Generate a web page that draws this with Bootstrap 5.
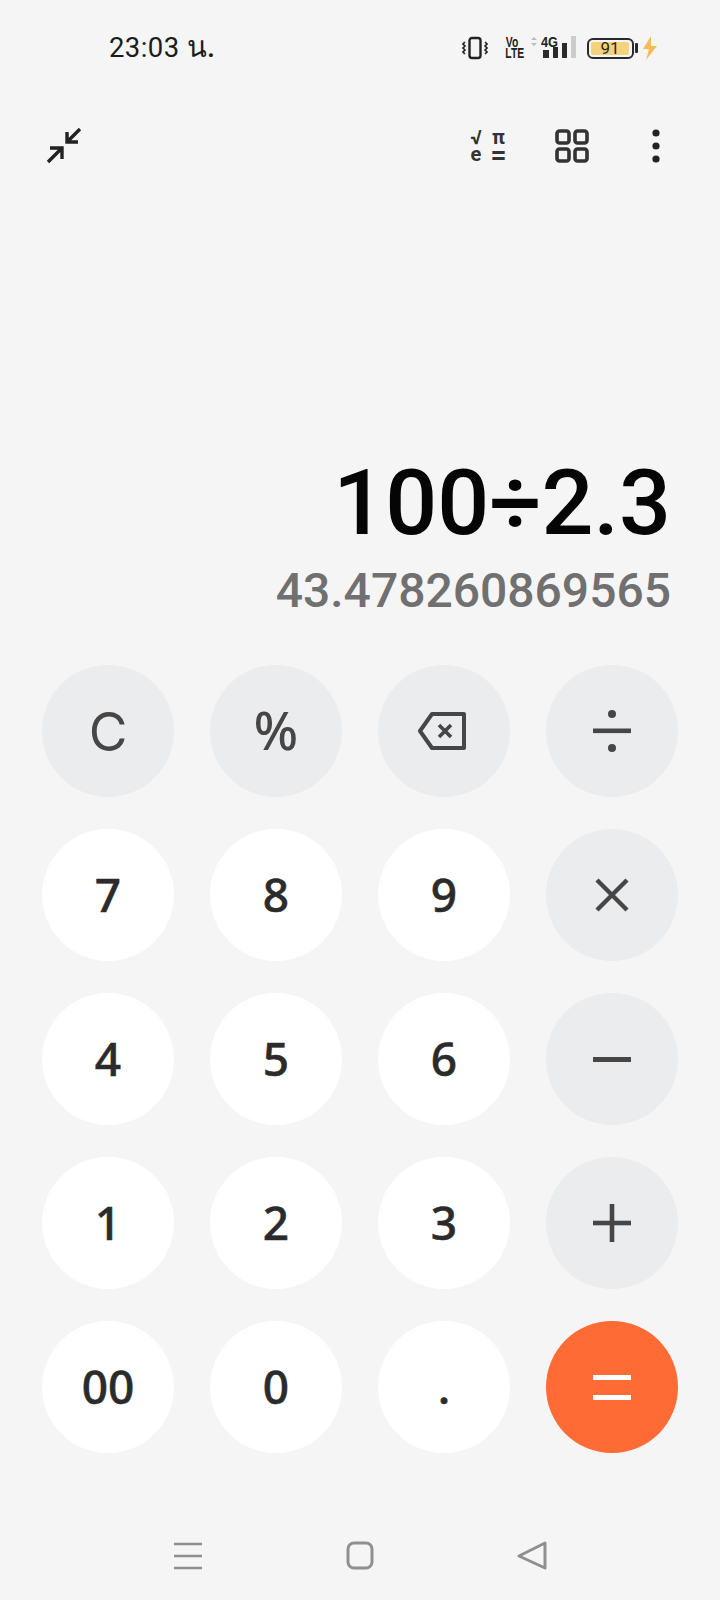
<!DOCTYPE html>
<html lang="th">

<head>
  <meta charset="UTF-8" />
  <meta name="viewport" content="width=device-width, initial-scale=1" />
  <title>Calculator</title>
  <link href="https://cdn.jsdelivr.net/npm/bootstrap@5.3.0/dist/css/bootstrap.min.css" rel="stylesheet" />
  <style>
    body {
      background: #f5f5f5;
      width: 720px;
      height: 1600px;
      overflow: hidden;
      font-family: Roboto, "Noto Sans", sans-serif;
    }

    .status-row {
      height: 96px;
      padding: 0 62px 0 109px;
    }

    .clock-text {
      font-size: 27.5px;
      color: #1c1c1c;
      letter-spacing: .4px;
    }

    .clock-text span {
      font-size: 29px;
      font-weight: 500;
    }

    .volte-text {
      width: 18px;
      margin-left: 15px;
      font-size: 14px;
      line-height: 11.5px;
      font-weight: 700;
      color: #222;
      text-align: center;
      font-family: "Liberation Sans", sans-serif;
      transform: scaleX(.74);
    }

    .volte-text span {
      display: block;
    }

    .net-text {
      left: 10px;
      top: 0;
      font-size: 15px;
      line-height: 12px;
      font-weight: 700;
      color: #222;
      font-family: "Liberation Sans", sans-serif;
      transform: scaleX(.85);
      transform-origin: left center;
    }

    .battery-box {
      width: 47px;
      height: 21px;
      border: 2px solid #2a2a2a;
      border-radius: 6px;
      padding: 2px;
    }

    .battery-fill {
      height: 100%;
      width: 38px;
      background: #f6d27c;
      border-radius: 2px;
      font-size: 17px;
      line-height: 13px;
      color: #2a2a2a;
      text-align: center;
    }

    .tool-row {
      height: 100px;
      padding: 0 60px 0 46px;
    }

    .math-icon {
      display: grid;
      grid-template-columns: 18px 19px;
      column-gap: 4px;
      width: 41px;
      font-weight: 700;
      font-size: 20px;
      line-height: 17px;
      color: #333;
      text-align: center;
    }

    .math-eq {
      font-size: 28px;
    }

    .display-box {
      height: 469px;
      padding: 0 49px 44px 0;
    }

    .expr-line {
      font-size: 91.5px;
      line-height: 100px;
      font-weight: 500;
      color: #050505;
      margin-bottom: 8px;
    }

    .result-line {
      font-size: 48px;
      line-height: 60px;
      font-weight: 500;
      color: #707070;
    }

    .key-grid {
      display: grid;
      grid-template-columns: repeat(4, 132px);
      column-gap: 36px;
      row-gap: 32px;
      padding: 0 42px;
    }

    .calc-key {
      width: 132px;
      height: 132px;
      padding: 0 0 3px;
      border: 0;
      background: #fff;
      color: #2b2b2b;
      font-family: "Noto Sans", sans-serif;
      font-size: 46px;
      font-weight: 500;
      -webkit-text-stroke: .5px #2b2b2b;
      line-height: 1;
    }

    .calc-key.key-op {
      background: #ebecee;
      color: #464646;
      -webkit-text-stroke: 0;
    }

    .calc-key.key-clear {
      font-family: Inter, sans-serif;
      font-size: 53px;
      font-weight: 400;
      padding: 2px 0 0;
    }

    .calc-key.key-pct {
      font-size: 52px;
    }

    .calc-key.key-eq {
      background: #ff6b35;
    }

    .nav-row {
      padding-top: 88px;
      gap: 142px;
    }
  </style>
</head>

<body>
  <!-- status bar -->
  <div class="status-row d-flex align-items-center">
    <span class="clock-text">23:03 <span>น.</span></span>
    <div class="d-flex align-items-center ms-auto">
      <svg width="26" height="24" viewBox="0 0 26 24" fill="none" stroke="#222">
        <rect x="7.5" y="2" width="11" height="20" rx="2.5" stroke-width="2.4" />
        <path d="M3 6l-2 2 2 2-2 2 2 2-2 2 2 2M23 6l2 2-2 2 2 2-2 2 2 2-2 2" stroke-width="1.6" />
      </svg>
      <div class="volte-text"><span>Vo</span><span>LTE</span></div>
      <div class="position-relative" style="margin-left:10px;width:46px;height:24px">
        <svg width="46" height="24" viewBox="0 0 46 24" class="d-block">
          <path d="M0 4l3-3 3 3zM0 7l3 3 3-3z" fill="#bbb" />
          <rect x="12" y="14" width="6" height="8" fill="#2a2a2a" />
          <rect x="22" y="11" width="5" height="11" fill="#2a2a2a" />
          <rect x="31" y="7" width="5" height="15" fill="#2a2a2a" />
          <rect x="40" y="0" width="5" height="22" fill="#ccc" />
        </svg>
        <span class="net-text position-absolute">4G</span>
      </div>
      <div class="battery-box" style="margin-left:10px">
        <div class="battery-fill">91</div>
      </div>
      <svg width="4" height="10" viewBox="0 0 4 10" style="margin-left:1px">
        <rect width="3" height="10" rx="1" fill="#2a2a2a" />
      </svg>
      <svg width="16" height="24" viewBox="0 0 16 24" style="margin-left:3px">
        <path d="M9 0L1 13h6L4 24l11-14H9z" fill="#f6bb59" />
      </svg>
    </div>
  </div>

  <!-- tool bar -->
  <div class="tool-row d-flex align-items-center">
    <svg width="36" height="36" viewBox="0 0 36 36" fill="none" stroke="#222" stroke-width="3.4">
      <path d="M21 4v10h11M21 14L34 1M4 20h12v11M16 20L2 34" />
    </svg>
    <div class="math-icon ms-auto">
      <span>√</span><span>π</span><span>e</span><span class="math-eq">=</span>
    </div>
    <svg width="34" height="34" viewBox="0 0 34 34" fill="none" stroke="#333" stroke-width="3.6" style="margin-left:47px">
      <rect x="2" y="2" width="12" height="12" rx="2.5" />
      <rect x="20" y="2" width="12" height="12" rx="2.5" />
      <rect x="2" y="20" width="12" height="12" rx="2.5" />
      <rect x="20" y="20" width="12" height="12" rx="2.5" />
    </svg>
    <svg width="8" height="34" viewBox="0 0 8 34" fill="#222" style="margin-left:63px">
      <circle cx="4" cy="4" r="3.6" />
      <circle cx="4" cy="17" r="3.6" />
      <circle cx="4" cy="30" r="3.6" />
    </svg>
  </div>

  <!-- expression and result -->
  <div class="display-box d-flex flex-column justify-content-end align-items-end">
    <div class="expr-line">100÷2.3</div>
    <div class="result-line">43.478260869565</div>
  </div>

  <!-- keys -->
  <div class="key-grid">
    <button class="btn calc-key key-op key-clear rounded-circle">C</button>
    <button class="btn calc-key key-op key-pct rounded-circle">%</button>
    <button class="btn calc-key key-op rounded-circle d-flex align-items-center justify-content-center p-0" aria-label="delete">
      <svg width="48" height="38" viewBox="0 0 48 38" fill="none" stroke="#464646" stroke-width="4" stroke-linejoin="round" style="margin-left:-4px">
        <path d="M46 2H14L2 19l12 17h32z" />
        <path d="M21 13l12 12M33 13L21 25" stroke-width="3.6" />
      </svg>
    </button>
    <button class="btn calc-key key-op rounded-circle d-flex align-items-center justify-content-center p-0" aria-label="divide">
      <svg width="38" height="42" viewBox="0 0 38 42" fill="#464646">
        <rect x="0" y="18.5" width="38" height="4.6" />
        <circle cx="19" cy="4" r="4" />
        <circle cx="19" cy="38" r="4" />
      </svg>
    </button>
    <button class="btn calc-key rounded-circle">7</button>
    <button class="btn calc-key rounded-circle">8</button>
    <button class="btn calc-key rounded-circle">9</button>
    <button class="btn calc-key key-op rounded-circle d-flex align-items-center justify-content-center p-0" aria-label="multiply">
      <svg width="34" height="34" viewBox="0 0 34 34" stroke="#464646" stroke-width="4.4">
        <path d="M2 2l30 30M32 2L2 32" />
      </svg>
    </button>
    <button class="btn calc-key rounded-circle">4</button>
    <button class="btn calc-key rounded-circle">5</button>
    <button class="btn calc-key rounded-circle">6</button>
    <button class="btn calc-key key-op rounded-circle d-flex align-items-center justify-content-center p-0" aria-label="minus">
      <svg width="38" height="5" viewBox="0 0 38 5" fill="#464646" class="d-block">
        <rect width="38" height="5" />
      </svg>
    </button>
    <button class="btn calc-key rounded-circle">1</button>
    <button class="btn calc-key rounded-circle">2</button>
    <button class="btn calc-key rounded-circle">3</button>
    <button class="btn calc-key key-op rounded-circle d-flex align-items-center justify-content-center p-0" aria-label="plus">
      <svg width="38" height="38" viewBox="0 0 38 38" fill="#464646">
        <rect y="16.7" width="38" height="4.6" />
        <rect x="16.7" width="4.6" height="38" />
      </svg>
    </button>
    <button class="btn calc-key rounded-circle">00</button>
    <button class="btn calc-key rounded-circle">0</button>
    <button class="btn calc-key rounded-circle">.</button>
    <button class="btn calc-key key-eq rounded-circle d-flex align-items-center justify-content-center p-0" aria-label="equals">
      <svg width="38" height="25" viewBox="0 0 38 25" fill="#fff">
        <rect width="38" height="5" />
        <rect y="20" width="38" height="5" />
      </svg>
    </button>
  </div>

  <!-- android nav -->
  <div class="nav-row d-flex justify-content-center">
    <svg width="30" height="30" viewBox="0 0 30 30" stroke="#8f8f8f" stroke-width="2.6">
      <path d="M1 3h28M1 15h28M1 27h28" />
    </svg>
    <svg width="30" height="30" viewBox="0 0 30 30" fill="none" stroke="#8f8f8f" stroke-width="3">
      <rect x="3" y="2" width="24" height="25" rx="6" />
    </svg>
    <svg width="30" height="30" viewBox="0 0 30 30" fill="none" stroke="#8f8f8f" stroke-width="3" stroke-linejoin="round">
      <path d="M28 2L2 15l26 12z" />
    </svg>
  </div>
</body>

</html>
